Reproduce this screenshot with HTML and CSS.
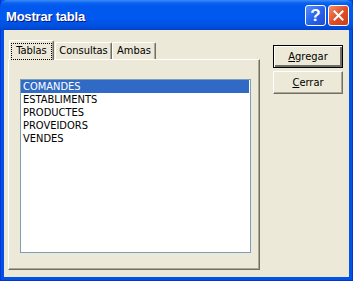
FILE: index.html
```html
<!DOCTYPE html>
<html lang="es">
<head>
  <meta charset="UTF-8">
  <title>Mostrar tabla</title>
  <link rel="stylesheet" href="styles.css">
</head>
<body>
  <div class="window">
    <div class="titlebar">
      <span class="title">Mostrar tabla</span>
      <div class="caption-buttons">
        <span class="cap-btn help">?</span>
        <span class="cap-btn close">
          <svg width="11" height="11" viewBox="0 0 11 11">
            <path d="M1.5 1.5 L9.5 9.5 M9.5 1.5 L1.5 9.5" stroke="#fff" stroke-width="2" stroke-linecap="square"/>
          </svg>
        </span>
      </div>
    </div>

    <div class="client">
      <div class="tab-area">
        <div class="tabs">
          <div class="tab selected"><span class="focus">Tablas</span></div>
          <div class="tab tab-consultas">Consultas</div>
          <div class="tab tab-ambas">Ambas</div>
        </div>
        <div class="panel">
          <ul class="listbox">
            <li class="active">COMANDES</li>
            <li>ESTABLIMENTS</li>
            <li>PRODUCTES</li>
            <li>PROVEIDORS</li>
            <li>VENDES</li>
          </ul>
        </div>
      </div>

      <div class="actions">
        <button class="btn default"><u>A</u>gregar</button>
        <button class="btn"><u>C</u>errar</button>
      </div>
    </div>
  </div>
</body>
</html>
```

FILE: styles.css
```css
/* Base */
body {
  margin: 0;
  padding: 0;
  font-family: 'DejaVu Sans Condensed', 'DejaVu Sans', sans-serif;
  font-stretch: condensed;
  font-size: 11px;
  color: #000;
  background: #fff;
}

/* Window frame */
.window {
  width: 353px;
  height: 281px;
  box-sizing: border-box;
  display: flex;
  flex-direction: column;
  background: #0054e3;
  border-left: 1px solid #0831d9;
  border-right: 1px solid #0831d9;
  border-bottom: 1px solid #0831d9;
}

.titlebar {
  height: 30px;
  flex: none;
  display: flex;
  align-items: center;
  justify-content: space-between;
  padding: 0 4px 0 6px;
  margin: 0 -1px;
  border-radius: 7px 7px 0 0;
  background: linear-gradient(to bottom, #3c8cf7 0, #0a62f0 3px, #0058ee 6px, #0059f0 18px, #0050e0 26px, #0043cc 30px);
}

.title {
  color: #fff;
  font-family: 'Liberation Sans', Arial, sans-serif;
  font-stretch: normal;
  font-weight: bold;
  font-size: 13px;
  letter-spacing: -0.2px;
  text-shadow: 1px 1px 0 #0a1883;
  padding-top: 2px;
}

.caption-buttons {
  display: flex;
  gap: 2px;
}

.cap-btn {
  width: 21px;
  height: 21px;
  box-sizing: border-box;
  border: 1px solid #fff;
  border-radius: 3px;
  display: flex;
  align-items: center;
  justify-content: center;
}

.help {
  background: linear-gradient(135deg, #5a8ef8 0, #2a63ee 50%, #1a4fd8 100%);
  color: #fff;
  font-family: 'Liberation Sans', Arial, sans-serif;
  font-weight: bold;
  font-size: 17px;
  line-height: 1;
}

.close {
  background: linear-gradient(135deg, #f0906a 0, #e0502a 50%, #c83e18 100%);
}

/* Client area */
.client {
  flex: 1;
  margin: 0 3px 3px;
  background: #ece9d8;
  display: flex;
}

.tab-area {
  padding: 10px 0 0 4px;
}

.tabs {
  display: flex;
  align-items: flex-end;
  height: 19px;
  padding-left: 1px;
  position: relative;
  z-index: 1;
}

.tab {
  box-sizing: border-box;
  height: 17px;
  border-top: 1px solid #fff;
  border-left: 1px solid #fff;
  border-right: 1px solid #716f64;
  border-radius: 2px 2px 0 0;
  box-shadow: inset -1px 0 0 #aca899;
  background: #ece9d8;
  text-align: center;
  line-height: 15px;
}

.tab.selected {
  width: 45px;
  height: 20px;
  margin-bottom: -1px;
  padding: 2px 1px 0;
}

.focus {
  display: block;
  border: 1px dotted #000;
  line-height: 14px;
  height: 15px;
}

.tab-consultas {
  width: 57px;
  margin-left: 1px;
}

.tab-ambas {
  width: 44px;
}

.panel {
  width: 252px;
  height: 211px;
  box-sizing: border-box;
  border-top: 1px solid #fff;
  border-left: 1px solid #fff;
  border-right: 1px solid #716f64;
  border-bottom: 1px solid #716f64;
  box-shadow: inset -1px -1px 0 #aca899;
  padding: 19px 0 0 11px;
}

.listbox {
  list-style: none;
  margin: 0;
  padding: 0;
  width: 231px;
  height: 174px;
  box-sizing: border-box;
  border: 1px solid #7f9db9;
  background: #fff;
}

.listbox li {
  height: 13px;
  line-height: 13px;
  padding-left: 2px;
  margin-right: 1px;
}

.listbox li.active {
  background: #316ac5;
  color: #fff;
}

/* Buttons */
.actions {
  display: flex;
  flex-direction: column;
  gap: 3px;
  padding: 15px 0 0 13px;
}

.btn {
  width: 70px;
  height: 23px;
  box-sizing: border-box;
  font-family: inherit;
  font-stretch: condensed;
  font-size: 11px;
  color: #000;
  background: #ece9d8;
  border: 1px solid;
  border-color: #fff #716f64 #716f64 #fff;
  box-shadow: inset -1px -1px 0 #aca899;
  padding: 0;
}

.btn.default {
  border: 1px solid #000;
  box-shadow: inset 1px 1px 0 #fff, inset -2px -2px 0 #716f64, inset -1px -1px 0 #aca899;
}
```
